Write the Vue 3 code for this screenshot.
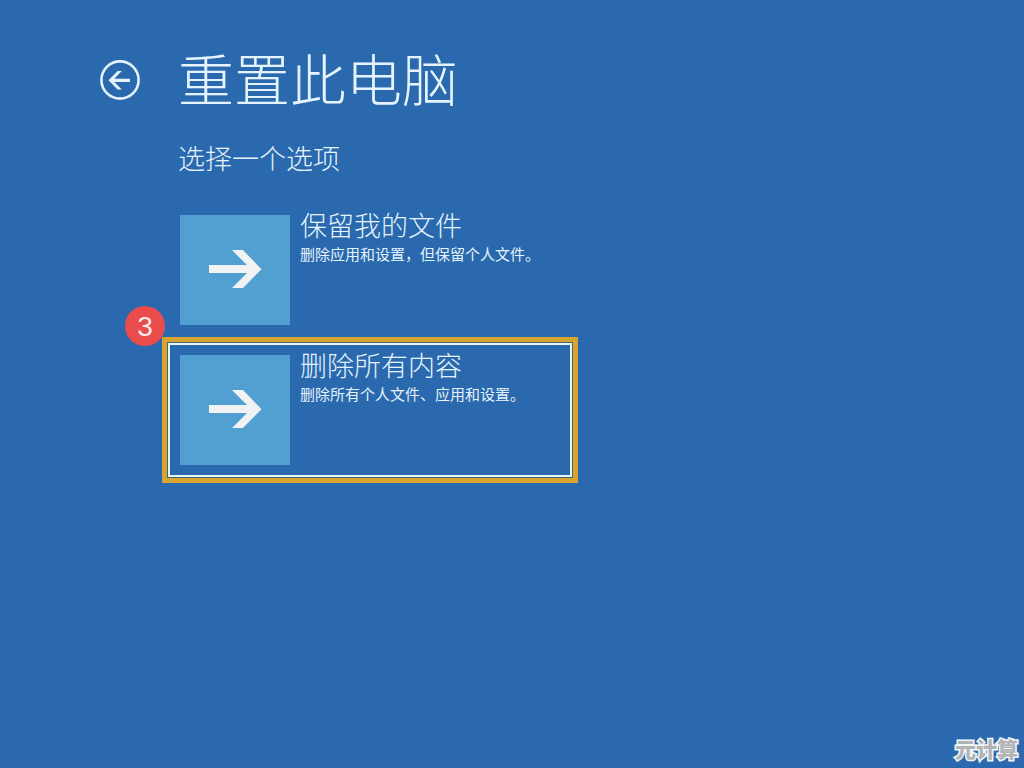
<script setup>
const options = [
  { id: 'keep', title: '保留我的文件', detail: '删除应用和设置，但保留个人文件。' },
  { id: 'remove', title: '删除所有内容', detail: '删除所有个人文件、应用和设置。', step: 3 },
]
</script>

<template>
  <main class="screen">
    <header class="header">
      <button class="back" type="button" aria-label="返回">
        <svg viewBox="0 0 40 40" aria-hidden="true">
          <circle cx="20" cy="20" r="18.6" fill="none" stroke="currentColor" stroke-width="2.6" />
          <path d="M8.500 20.300 17.600 11H21.800L14.300 18.700H30V21.900H14.300L21.800 29.600H17.600Z" fill="currentColor" />
        </svg>
      </button>
      <h1 class="title">重置此电脑</h1>
    </header>

    <section class="content">
      <h2 class="subtitle">选择一个选项</h2>
      <ul class="options">
        <li v-for="option in options" :key="option.id" class="item">
          <button class="option" :class="{ selected: option.step }" type="button">
            <span class="tile">
              <svg viewBox="0 0 110 110" aria-hidden="true">
                <path d="M29 50H67L52 35H63L81.500 54.200 63 73H52L67 58H29Z" fill="#f0f2f4" />
              </svg>
            </span>
            <span class="text">
              <span class="name">{{ option.title }}</span>
              <span class="detail">{{ option.detail }}</span>
            </span>
          </button>
          <span v-if="option.step" class="badge">{{ option.step }}</span>
        </li>
      </ul>
    </section>

    <footer class="watermark">元计算</footer>
  </main>
</template>

<style>
body {
  background: #2a69ad;
}
</style>

<style scoped>
.screen {
  box-sizing: border-box;
  min-height: 100vh;
  padding-top: 47px;
  display: flex;
  flex-direction: column;
  color: #e4f3fd;
  background: #2a69ad;
  font-family: "Noto Sans CJK SC", sans-serif;
  font-weight: 300;
}
.header {
  display: flex;
  align-items: flex-start;
  gap: 38px;
  padding-left: 100px;
}
.back {
  width: 40px;
  height: 40px;
  margin-top: 13px;
  padding: 0;
  border: 0;
  border-radius: 50%;
  color: #e4f3fd;
  background: none;
}
.back svg,
.tile svg {
  display: block;
  width: 100%;
}
.title {
  margin: 0;
  font-size: 56px;
  line-height: 60px;
  font-weight: 300;
}
.content {
  padding: 33px 20px 0 168px;
}
.subtitle {
  margin: 0 0 27px 10px;
  font-size: 27px;
  line-height: 36px;
  font-weight: 300;
}
.options {
  max-width: 404px;
  margin: 0;
  padding: 0;
  display: flex;
  flex-direction: column;
  gap: 6px;
  list-style: none;
}
.item {
  position: relative;
}
.option {
  width: 100%;
  display: flex;
  align-items: flex-start;
  gap: 10px;
  padding: 4px 10px 10px;
  border: 2px solid transparent;
  color: inherit;
  background: none;
  font: inherit;
  text-align: left;
}
.selected {
  border-color: #e8f6f2;
  box-shadow: 0 0 0 1px #3f6678, 0 0 0 6px #d6a42f;
}
.tile {
  flex: none;
  width: 110px;
  height: 110px;
  margin-top: 6px;
  background: #529fd1;
}
.text {
  display: flex;
  flex-direction: column;
  gap: 3px;
}
.name {
  font-size: 27px;
  line-height: 32px;
}
.detail {
  font-size: 15px;
  line-height: 20px;
  font-weight: 400;
}
.badge {
  position: absolute;
  top: -37px;
  left: -43px;
  width: 40px;
  height: 40px;
  border-radius: 50%;
  color: #fdeaea;
  background: #ea4b4b;
  font: 28px/42px "Liberation Sans", sans-serif;
  text-align: center;
}
.watermark {
  margin-top: auto;
  padding: 0 6px 6px;
  color: #b2b4b6;
  font-size: 21px;
  line-height: 28px;
  font-weight: 900;
  text-align: right;
  -webkit-text-stroke: 3px #f4f7fa;
  paint-order: stroke fill;
}
</style>
